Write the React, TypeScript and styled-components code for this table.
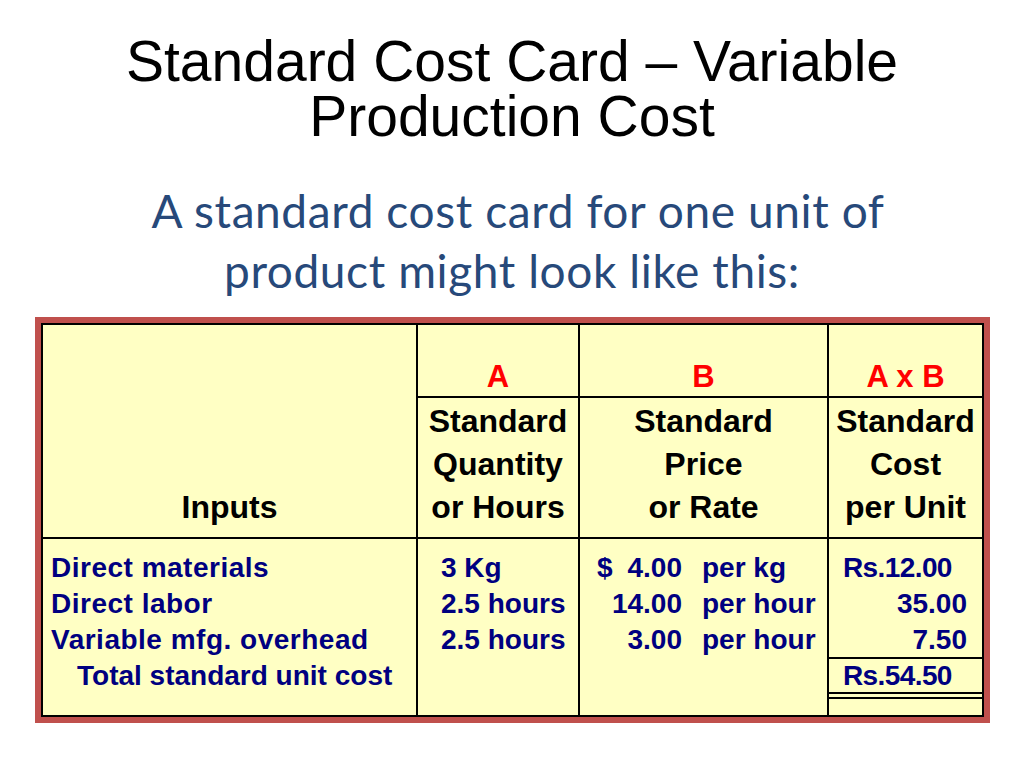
import styled, { createGlobalStyle } from "styled-components";

const GlobalStyle = createGlobalStyle`
    html, body {
        margin: 0;
        padding: 0;
        background: #ffffff;
    }
`;

const Page = styled.div`
    width: 1024px;
    height: 768px;
    overflow: hidden;
    background: #ffffff;
`;

const Title = styled.h1`
    margin: 34px 0 0;
    font-family: "Liberation Sans", Arial, sans-serif;
    font-weight: 400;
    font-size: 57px;
    line-height: 55px;
    color: #000000;
    text-align: center;
`;

const Subtitle = styled.p`
    margin: 37px 0 0;
    font-family: Lato, "Open Sans", sans-serif;
    font-size: 46px;
    letter-spacing: 0.6px;
    line-height: 60px;
    color: #27497a;
    text-align: center;
`;

const SubLine = styled.span<{ $shift?: number }>`
    display: block;
    padding-left: ${(p) => p.$shift ?? 0}px;
`;

const Card = styled.div`
    margin: 16px 0 0 35px;
    width: 955px;
    box-sizing: border-box;
    border: 6px solid #c0504d;
`;

const Grid = styled.div`
    display: grid;
    grid-template-columns: 373px 160px 247px 153px;
    grid-template-rows: 71px 139px 176px;
    gap: 2px;
    padding: 2px;
    background: #000000;
    font-family: "Liberation Sans", Arial, sans-serif;
    font-weight: 700;
`;

const Cell = styled.div`
    background: #ffffc4;
    min-width: 0;
`;

const HeadCell = styled(Cell)<{ $span?: boolean }>`
    grid-row: ${(p) => (p.$span ? "1 / span 2" : "auto")};
    display: flex;
    flex-direction: column;
    justify-content: flex-end;
    align-items: center;
    padding-bottom: 8px;
    font-size: 32px;
    line-height: 43px;
    color: #000000;
    text-align: center;
`;

const LetterCell = styled(Cell)`
    display: flex;
    align-items: flex-end;
    justify-content: center;
    padding-bottom: 4px;
    font-size: 31px;
    line-height: 31px;
    color: #ff0000;
    white-space: pre;
`;

const BodyCell = styled(Cell)<{ $pad: number; $spread?: boolean }>`
    padding: 11px 0 0 ${(p) => p.$pad}px;
    font-size: 28px;
    line-height: 36px;
    letter-spacing: ${(p) => (p.$spread ? "0.5px" : "normal")};
    color: #000080;
    white-space: nowrap;
`;

const Line = styled.div<{ $indent?: number }>`
    height: 36px;
    padding-left: ${(p) => p.$indent ?? 0}px;
`;

const TotalLabel = styled(Line)`
    letter-spacing: normal;
`;

const PriceRow = styled.div`
    display: flex;
    height: 36px;
`;

const Amount = styled.span`
    display: flex;
    justify-content: space-between;
    width: 85px;
`;

const Unit = styled.span`
    margin-left: 20px;
`;

const CostCell = styled(Cell)`
    display: flex;
    flex-direction: column;
    font-size: 28px;
    color: #000080;
    white-space: nowrap;
`;

const CostValues = styled.div`
    height: 118px;
    box-sizing: border-box;
    padding-top: 11px;
`;

const CostLine = styled.div<{ $right?: boolean }>`
    height: 36px;
    line-height: 36px;
    text-align: ${(p) => (p.$right ? "right" : "left")};
    padding: ${(p) => (p.$right ? "0 15px 0 0" : "0 0 0 14px")};
`;

const Money = styled.span`
    letter-spacing: -0.6px;
`;

const TotalLine = styled.div`
    height: 33px;
    line-height: 33px;
    padding-left: 14px;
`;

const Rule = styled.div`
    height: 2px;
    background: #000000;
    flex: none;
`;

const Gap = styled.div`
    height: 3px;
`;

const inputs = ["Direct materials", "Direct labor", "Variable mfg. overhead"];
const quantities = ["3 Kg", "2.5 hours", "2.5 hours"];
const prices = [
    { sign: "$", amount: "4.00", unit: "per kg" },
    { sign: "", amount: "14.00", unit: "per hour" },
    { sign: "", amount: "3.00", unit: "per hour" },
];

export default function App() {
    return (
        <Page>
            <GlobalStyle />
            <Title>
                Standard Cost Card – Variable
                <br />
                Production Cost
            </Title>
            <Subtitle>
                <SubLine $shift={12}>A standard cost card for one unit of</SubLine>
                <SubLine>product might look like this:</SubLine>
            </Subtitle>
            <Card>
                <Grid>
                    <HeadCell $span>Inputs</HeadCell>
                    <LetterCell>A</LetterCell>
                    <LetterCell>B</LetterCell>
                    <LetterCell>A x B</LetterCell>
                    <HeadCell>
                        <span>Standard</span>
                        <span>Quantity</span>
                        <span>or Hours</span>
                    </HeadCell>
                    <HeadCell>
                        <span>Standard</span>
                        <span>Price</span>
                        <span>or Rate</span>
                    </HeadCell>
                    <HeadCell>
                        <span>Standard</span>
                        <span>Cost</span>
                        <span>per Unit</span>
                    </HeadCell>

                    <BodyCell $pad={8} $spread>
                        {inputs.map((t) => (
                            <Line key={t}>{t}</Line>
                        ))}
                        <TotalLabel $indent={26}>Total standard unit cost</TotalLabel>
                    </BodyCell>
                    <BodyCell $pad={23}>
                        {quantities.map((q, i) => (
                            <Line key={i}>{q}</Line>
                        ))}
                    </BodyCell>
                    <BodyCell $pad={17}>
                        {prices.map((p, i) => (
                            <PriceRow key={i}>
                                <Amount>
                                    <span>{p.sign}</span>
                                    <span>{p.amount}</span>
                                </Amount>
                                <Unit>{p.unit}</Unit>
                            </PriceRow>
                        ))}
                    </BodyCell>
                    <CostCell>
                        <CostValues>
                            <CostLine>
                                <Money>Rs.12.00</Money>
                            </CostLine>
                            <CostLine $right>35.00</CostLine>
                            <CostLine $right>7.50</CostLine>
                        </CostValues>
                        <Rule />
                        <TotalLine>
                            <Money>Rs.54.50</Money>
                        </TotalLine>
                        <Rule />
                        <Gap />
                        <Rule />
                    </CostCell>
                </Grid>
            </Card>
        </Page>
    );
}
